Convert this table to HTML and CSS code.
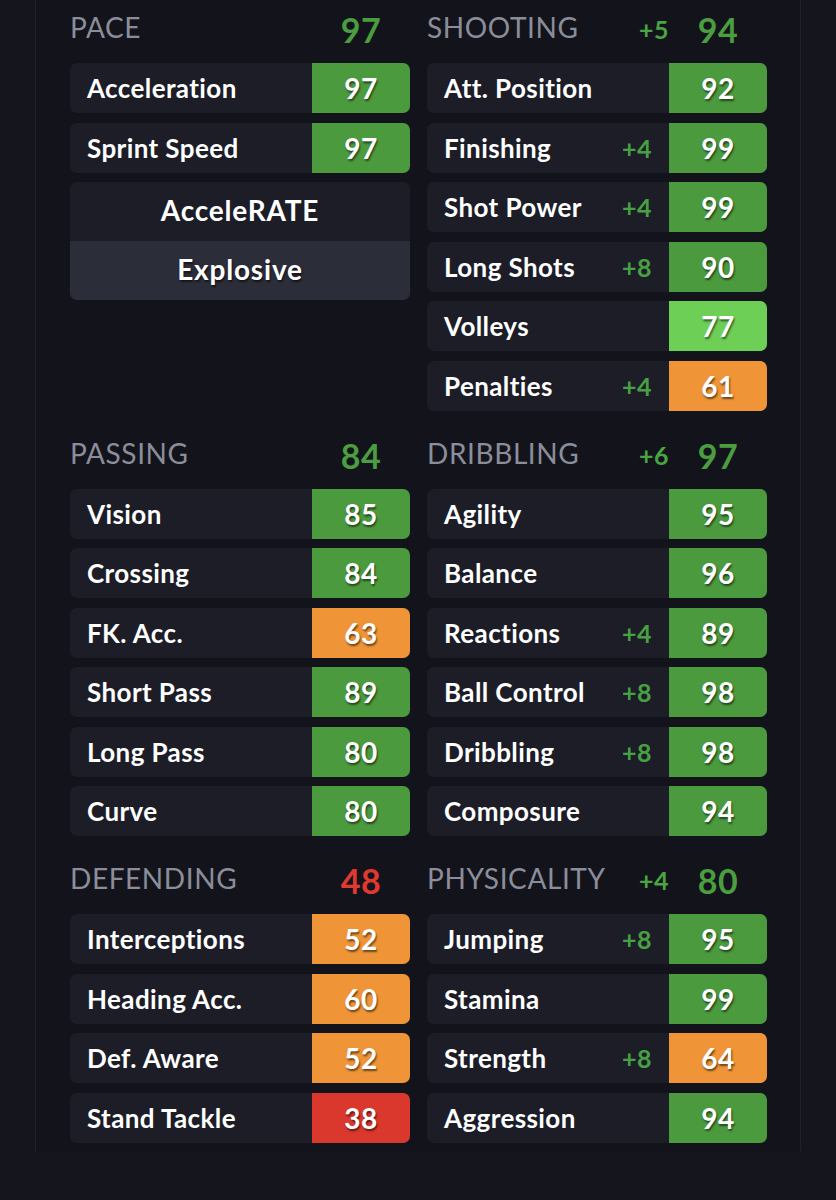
FILE: index.html
```html
<!DOCTYPE html>
<html>
<head>
<meta charset="utf-8">
<link rel="stylesheet" href="styles.css">
</head>
<body>
<div class="panel">
  <div class="grid">
    <section class="sec">
      <div class="head"><span class="title">PACE</span><span class="score green">97</span></div>
      <div class="rows">
        <div class="row"><span class="label">Acceleration</span><span class="val g">97</span></div>
        <div class="row"><span class="label">Sprint Speed</span><span class="val g">97</span></div>
        <div class="accel">
          <div class="accel-top">AcceleRATE</div>
          <div class="accel-bot">Explosive</div>
        </div>
      </div>
    </section>
    <section class="sec">
      <div class="head"><span class="title">SHOOTING</span><span class="hmod">+5</span><span class="score green">94</span></div>
      <div class="rows">
        <div class="row"><span class="label">Att. Position</span><span class="val g">92</span></div>
        <div class="row"><span class="label">Finishing</span><span class="mod">+4</span><span class="val g">99</span></div>
        <div class="row"><span class="label">Shot Power</span><span class="mod">+4</span><span class="val g">99</span></div>
        <div class="row"><span class="label">Long Shots</span><span class="mod">+8</span><span class="val g">90</span></div>
        <div class="row"><span class="label">Volleys</span><span class="val lg">77</span></div>
        <div class="row"><span class="label">Penalties</span><span class="mod">+4</span><span class="val o">61</span></div>
      </div>
    </section>
    <section class="sec">
      <div class="head"><span class="title">PASSING</span><span class="score green">84</span></div>
      <div class="rows">
        <div class="row"><span class="label">Vision</span><span class="val g">85</span></div>
        <div class="row"><span class="label">Crossing</span><span class="val g">84</span></div>
        <div class="row"><span class="label">FK. Acc.</span><span class="val o">63</span></div>
        <div class="row"><span class="label">Short Pass</span><span class="val g">89</span></div>
        <div class="row"><span class="label">Long Pass</span><span class="val g">80</span></div>
        <div class="row"><span class="label">Curve</span><span class="val g">80</span></div>
      </div>
    </section>
    <section class="sec">
      <div class="head"><span class="title">DRIBBLING</span><span class="hmod">+6</span><span class="score green">97</span></div>
      <div class="rows">
        <div class="row"><span class="label">Agility</span><span class="val g">95</span></div>
        <div class="row"><span class="label">Balance</span><span class="val g">96</span></div>
        <div class="row"><span class="label">Reactions</span><span class="mod">+4</span><span class="val g">89</span></div>
        <div class="row"><span class="label">Ball Control</span><span class="mod">+8</span><span class="val g">98</span></div>
        <div class="row"><span class="label">Dribbling</span><span class="mod">+8</span><span class="val g">98</span></div>
        <div class="row"><span class="label">Composure</span><span class="val g">94</span></div>
      </div>
    </section>
    <section class="sec">
      <div class="head"><span class="title">DEFENDING</span><span class="score red">48</span></div>
      <div class="rows">
        <div class="row"><span class="label">Interceptions</span><span class="val o">52</span></div>
        <div class="row"><span class="label">Heading Acc.</span><span class="val o">60</span></div>
        <div class="row"><span class="label">Def. Aware</span><span class="val o">52</span></div>
        <div class="row"><span class="label">Stand Tackle</span><span class="val r">38</span></div>
      </div>
    </section>
    <section class="sec">
      <div class="head"><span class="title">PHYSICALITY</span><span class="hmod">+4</span><span class="score green">80</span></div>
      <div class="rows">
        <div class="row"><span class="label">Jumping</span><span class="mod">+8</span><span class="val g">95</span></div>
        <div class="row"><span class="label">Stamina</span><span class="val g">99</span></div>
        <div class="row"><span class="label">Strength</span><span class="mod">+8</span><span class="val o">64</span></div>
        <div class="row"><span class="label">Aggression</span><span class="val g">94</span></div>
      </div>
    </section>
  </div>
</div>
</body>
</html>
```

FILE: styles.css
```css
html, body {
  margin: 0;
  padding: 0;
  background: #14151d;
  font-family: "Lato", "Liberation Sans", sans-serif;
  color: #ffffff;
}

.panel {
  width: 697px;
  margin: 0 0 0 35px;
  padding: 0 33px 8px 34px;
  background: #13141b;
  border-left: 1px solid #20212a;
  border-right: 1px solid #20212a;
}

.grid {
  display: grid;
  grid-template-columns: 340px 340px;
  column-gap: 17px;
  row-gap: 15px;
}

.head {
  height: 56px;
  margin-bottom: 7px;
  display: flex;
  align-items: center;
}

.title {
  flex: 1;
  font-size: 28px;
  font-weight: 400;
  color: #8b8e9a;
  letter-spacing: 0.6px;
  padding-bottom: 2px;
}

.hmod {
  font-size: 25px;
  font-weight: 700;
  color: #4aa443;
  letter-spacing: 0.5px;
  padding-top: 2px;
}

.score {
  width: 98px;
  text-align: center;
  font-size: 34px;
  font-weight: 700;
  letter-spacing: 0.5px;
  padding-top: 3px;
}

.score.green { color: #4a9e3f; }
.score.red { color: #e0392f; }

.rows {
  display: flex;
  flex-direction: column;
  gap: 9.5px;
}

.row {
  height: 50px;
  display: flex;
  align-items: center;
  background: #1c1d27;
  border-radius: 7px;
  overflow: hidden;
}

.label {
  flex: 1;
  padding-left: 17px;
  font-size: 26px;
  font-weight: 700;
  letter-spacing: 0.4px;
  color: #ffffff;
}

.mod {
  font-size: 25px;
  font-weight: 700;
  letter-spacing: 0.5px;
  color: #47a043;
  padding-right: 17px;
}

.val {
  width: 98px;
  height: 50px;
  display: flex;
  align-items: center;
  justify-content: center;
  font-size: 28px;
  font-weight: 700;
  letter-spacing: 0.5px;
  color: #ffffff;
  text-shadow: 1px 2px 2px rgba(0, 0, 0, 0.55);
}

.val.g { background: #4c9a3e; }
.val.lg { background: #6dcf55; }
.val.o { background: #ef9537; }
.val.r { background: #da372d; }

.accel {
  border-radius: 7px;
  overflow: hidden;
}

.accel-top,
.accel-bot {
  height: 59px;
  display: flex;
  align-items: center;
  justify-content: center;
  font-size: 28px;
  font-weight: 700;
  letter-spacing: 0.8px;
}

.accel-top { background: #1c1d27; padding-bottom: 3px; height: 56px; }
.accel-bot {
  background: #2b2d39;
  padding-bottom: 3px;
  height: 56px;
  text-shadow: 1px 2px 2px rgba(0, 0, 0, 0.55);
}
```
